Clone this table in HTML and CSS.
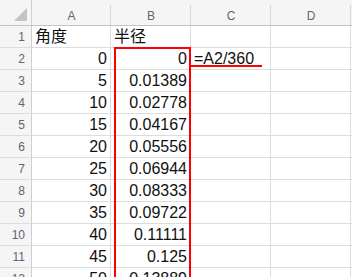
FILE: index.html
```html
<!DOCTYPE html>
<html lang="zh-CN">
<head>
<meta charset="utf-8">
<title>角度与半径</title>
<link rel="stylesheet" href="styles.css">
</head>
<body>
<div class="sheet">
  <div class="grid">
    <div class="corner">
      <svg class="corner-mark" width="13" height="13" viewBox="0 0 13 13"><polygon points="13,0 13,13 0,13" fill="#c4c4c4"/></svg>
    </div>
    <div class="col-head">A</div>
    <div class="col-head">B</div>
    <div class="col-head">C</div>
    <div class="col-head">D</div>
    <div class="col-head"></div>

    <div class="row-head">1</div>
    <div class="cell text">角度</div>
    <div class="cell text">半径</div>
    <div class="cell"></div><div class="cell"></div><div class="cell"></div>

    <div class="row-head">2</div>
    <div class="cell num">0</div>
    <div class="cell num">0</div>
    <div class="cell text">=A2/360</div>
    <div class="cell"></div><div class="cell"></div>

    <div class="row-head">3</div>
    <div class="cell num">5</div><div class="cell num">0.01389</div>
    <div class="cell"></div><div class="cell"></div><div class="cell"></div>

    <div class="row-head">4</div>
    <div class="cell num">10</div><div class="cell num">0.02778</div>
    <div class="cell"></div><div class="cell"></div><div class="cell"></div>

    <div class="row-head">5</div>
    <div class="cell num">15</div><div class="cell num">0.04167</div>
    <div class="cell"></div><div class="cell"></div><div class="cell"></div>

    <div class="row-head">6</div>
    <div class="cell num">20</div><div class="cell num">0.05556</div>
    <div class="cell"></div><div class="cell"></div><div class="cell"></div>

    <div class="row-head">7</div>
    <div class="cell num">25</div><div class="cell num">0.06944</div>
    <div class="cell"></div><div class="cell"></div><div class="cell"></div>

    <div class="row-head">8</div>
    <div class="cell num">30</div><div class="cell num">0.08333</div>
    <div class="cell"></div><div class="cell"></div><div class="cell"></div>

    <div class="row-head">9</div>
    <div class="cell num">35</div><div class="cell num">0.09722</div>
    <div class="cell"></div><div class="cell"></div><div class="cell"></div>

    <div class="row-head">10</div>
    <div class="cell num">40</div><div class="cell num">0.11111</div>
    <div class="cell"></div><div class="cell"></div><div class="cell"></div>

    <div class="row-head">11</div>
    <div class="cell num">45</div><div class="cell num">0.125</div>
    <div class="cell"></div><div class="cell"></div><div class="cell"></div>

    <div class="row-head">12</div>
    <div class="cell num">50</div><div class="cell num">0.13889</div>
    <div class="cell"></div><div class="cell"></div><div class="cell"></div>
  </div>

  <!-- annotation: box around the radius column and underline under the formula -->
  <div class="mark-box"></div>
  <div class="mark-line"></div>
</div>
</body>
</html>
```

FILE: styles.css
```css
html, body {
  margin: 0;
  padding: 0;
  background: #ffffff;
  overflow: hidden;
}

.sheet {
  position: relative;
  width: 352px;
  height: 277px;
  overflow: hidden;
}

.grid {
  display: grid;
  grid-template-columns: 32px 79px 80px 80px 80px 40px;
  grid-template-rows: 26px repeat(12, 22px);
  font-family: "Liberation Sans", "Noto Sans CJK SC", sans-serif;
}

.corner,
.col-head,
.row-head,
.cell {
  box-sizing: border-box;
}

.corner {
  background: #f5f5f5;
  border-right: 1px solid #cfcfcf;
  border-bottom: 1px solid #c4c4c4;
  display: flex;
  align-items: flex-end;
  justify-content: flex-end;
  padding: 0 4px 4px 0;
}

.corner-mark {
  display: block;
}

.col-head {
  background:
    linear-gradient(#f5f5f5, #f5f5f5) no-repeat top left / 100% 5px,
    linear-gradient(to left, #d6d6d6 1px, #f5f5f5 1px);
  border-bottom: 1px solid #c4c4c4;
  color: #666666;
  font-size: 12px;
  display: flex;
  align-items: center;
  justify-content: center;
  padding-top: 6px;
}

.row-head {
  background: #f5f5f5;
  border-right: 1px solid #cfcfcf;
  border-bottom: 1px solid #dcdcdc;
  color: #5f6470;
  font-size: 12px;
  display: flex;
  align-items: flex-end;
  justify-content: flex-end;
  padding: 0 6px 3px 0;
  line-height: 14px;
}

.cell {
  border-right: 1px solid #dcdcdc;
  border-bottom: 1px solid #dcdcdc;
  color: #111111;
  font-size: 16px;
  line-height: 16px;
  display: flex;
  align-items: flex-end;
  padding: 0 3px 2px 3px;
  white-space: nowrap;
}

.cell.num {
  justify-content: flex-end;
}

.cell.text {
  justify-content: flex-start;
}

.mark-box {
  position: absolute;
  left: 114px;
  top: 47px;
  width: 73px;
  height: 260px;
  border: 2px solid #ff0000;
}

.mark-line {
  position: absolute;
  left: 191px;
  top: 65px;
  width: 71px;
  height: 2px;
  background: #ff0000;
}
```
